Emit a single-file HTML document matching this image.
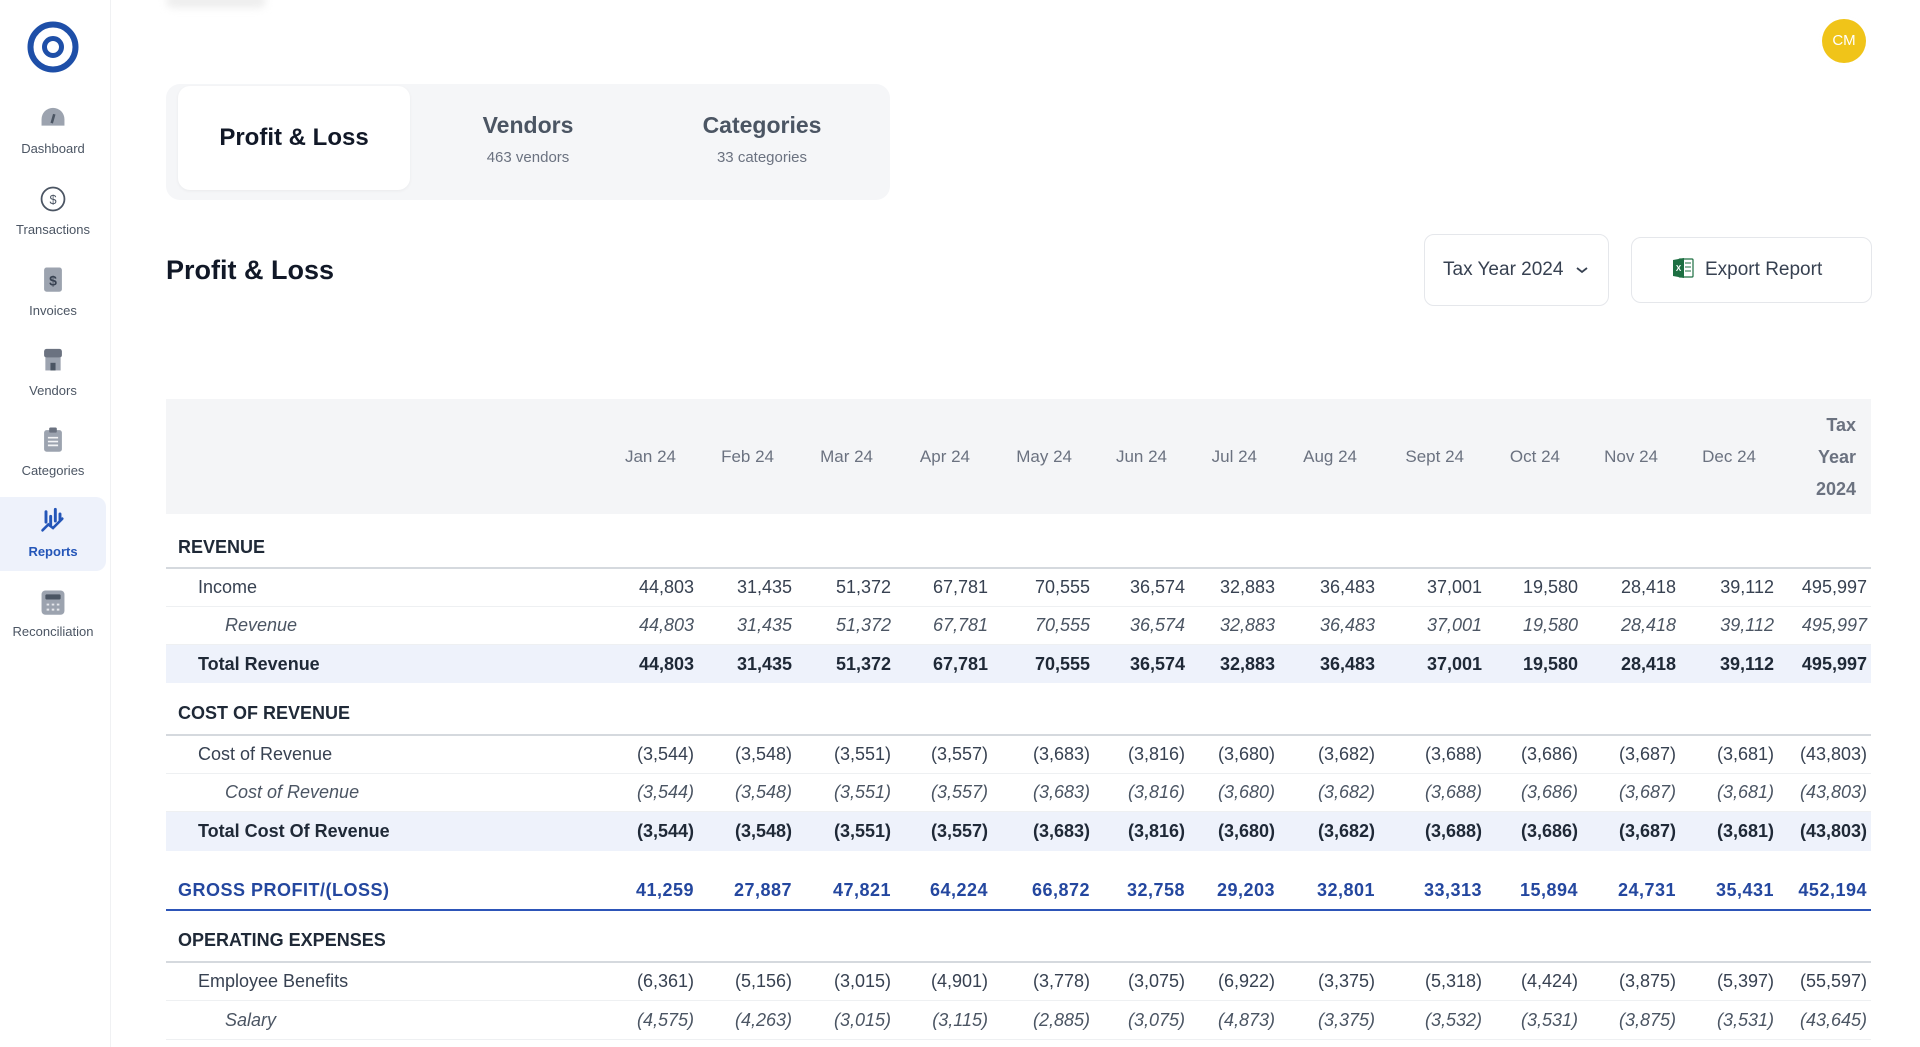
<!DOCTYPE html>
<html><head><meta charset="utf-8"><style>
*{margin:0;padding:0;box-sizing:border-box}
body{width:1920px;height:1047px;overflow:hidden;background:#fff;font-family:"Liberation Sans",sans-serif;color:#1f2937;position:relative}
.side{position:absolute;left:0;top:0;width:111px;height:1047px;background:#fff;border-right:1px solid #f0f1f3}
.nav{position:absolute;left:0;width:106px;text-align:center;font-size:13px;color:#4b5563}
.nav .ic{position:absolute;left:39px;width:28px;height:28px}
.nav .lb{position:absolute;left:0;width:106px;text-align:center}
.tabs{position:absolute;left:166px;top:84px;width:724px;height:116px;background:#f5f6f8;border-radius:14px}
.tab-a{position:absolute;left:12px;top:2px;width:232px;height:104px;background:#fff;border-radius:12px;box-shadow:0 1px 3px rgba(0,0,0,.05);font-size:24px;font-weight:bold;color:#111827;text-align:center;line-height:104px}
.tab{position:absolute;top:28px;width:200px;text-align:center}
.tab b{display:block;font-size:23px;color:#4b5563}
.tab span{display:block;font-size:15px;color:#6b7280;margin-top:10px}
.h1{position:absolute;left:166px;top:255px;font-size:27px;font-weight:bold;color:#111827}
.btn{position:absolute;border:1px solid #e5e7eb;border-radius:10px;background:#fff;font-size:19px;color:#374151}
.row{position:absolute;left:166px;width:1705px;display:grid;grid-template-columns:428px 100px 98px 99px 97px 102px 95px 90px 100px 107px 96px 98px 98px 93px;align-items:center;font-size:18px;color:#374151}
.row>div{text-align:right;white-space:nowrap}
.row>div:first-child{text-align:left}
.hdr{top:399px;height:115px;background:#f4f5f7;color:#6b7280;font-size:17px}
.hdr>div{padding-right:18px}
.sec{font-weight:bold;color:#1f2937;border-bottom:2px solid #d5d9de}
.sec>div:first-child{padding-left:12px}
.r>div:first-child{padding-left:32px}
.r{border-bottom:1px solid #eef0f2}
.it{font-style:italic;color:#4b5563;border-bottom:1px solid #eef0f2}
.it>div:first-child{padding-left:59px}
.tot{background:#eef2fb;font-weight:bold;color:#1f2937}
.tot>div:first-child{padding-left:32px}
.gp{font-weight:bold;color:#24479f;border-bottom:2px solid #2d55b8;letter-spacing:.5px}
.gp>div:first-child{padding-left:12px}
</style></head><body>
<div class="side">
  <svg style="position:absolute;left:27px;top:21px" width="52" height="52" viewBox="0 0 52 52"><circle cx="26" cy="26" r="22.5" fill="none" stroke="#1e4fa8" stroke-width="6"/><circle cx="26" cy="26" r="8.5" fill="none" stroke="#1e4fa8" stroke-width="5"/></svg>
  <div class="nav" style="top:0">
    <svg class="ic" style="top:104px" viewBox="0 0 22 22"><path d="M11 3a9 9 0 0 0-9 9v5h18v-5a9 9 0 0 0-9-9z" fill="#9ca3af"/><path d="M12 8l-2 7" stroke="#4b5563" stroke-width="2"/></svg>
    <div class="lb" style="top:141px">Dashboard</div>
    <svg class="ic" style="top:185px" viewBox="0 0 22 22"><circle cx="11" cy="11" r="9" fill="none" stroke="#4b5563" stroke-width="1.4"/><text x="11" y="15" font-size="10" text-anchor="middle" fill="#4b5563" font-family="Liberation Sans">$</text></svg>
    <div class="lb" style="top:222px">Transactions</div>
    <svg class="ic" style="top:265px" viewBox="0 0 22 22"><rect x="4" y="2" width="14" height="19" rx="2" fill="#9ca3af"/><text x="11" y="16" font-size="11" text-anchor="middle" fill="#374151" font-family="Liberation Sans" font-weight="bold">$</text></svg>
    <div class="lb" style="top:303px">Invoices</div>
    <svg class="ic" style="top:345px" viewBox="0 0 22 22"><rect x="4" y="3" width="14" height="7" rx="2" fill="#6b7280"/><rect x="5" y="10" width="12" height="10" fill="#9ca3af"/><rect x="9" y="14" width="4" height="6" fill="#4b5563"/></svg>
    <div class="lb" style="top:383px">Vendors</div>
    <svg class="ic" style="top:425px" viewBox="0 0 22 22"><rect x="4" y="4" width="14" height="17" rx="2" fill="#9ca3af"/><rect x="8" y="2" width="6" height="4" rx="1" fill="#6b7280"/><path d="M7 10h8M7 13h8M7 16h8" stroke="#f3f4f6" stroke-width="1.3"/></svg>
    <div class="lb" style="top:463px">Categories</div>
  </div>
  <div style="position:absolute;left:0;top:497px;width:106px;height:74px;background:#eef2fb;border-radius:0 10px 10px 0"></div>
  <svg style="position:absolute;left:39px;top:507px" width="28" height="28" viewBox="0 0 24 24"><path d="M6 4v9M10 8v8M14 2v10M18 6v5" stroke="#2456b8" stroke-width="2.5" stroke-linecap="round"/><path d="M3 20l5-5 4 3 8-8" stroke="#2456b8" stroke-width="2.2" fill="none" stroke-linecap="round"/></svg>
  <div style="position:absolute;left:0;top:544px;width:106px;text-align:center;font-size:13px;font-weight:bold;color:#2456b8">Reports</div>
  <svg style="position:absolute;left:39px;top:588px" width="28" height="28" viewBox="0 0 22 22"><rect x="2" y="2" width="18" height="19" rx="3" fill="#9ca3af"/><rect x="5" y="5" width="12" height="4" rx="1" fill="#4b5563"/><path d="M6 13h2M10 13h2M14 13h2M6 17h2M10 17h2M14 17h2" stroke="#e5e7eb" stroke-width="1.5"/></svg>
  <div style="position:absolute;left:0;top:624px;width:106px;text-align:center;font-size:13px;color:#4b5563">Reconciliation</div>
</div>
<div style="position:absolute;left:166px;top:-6px;width:100px;height:14px;background:#eee;border-radius:7px;filter:blur(4px)"></div>
<div style="position:absolute;left:1822px;top:19px;width:44px;height:44px;border-radius:50%;background:#f0c419;color:#fff;font-size:15px;text-align:center;line-height:44px;box-shadow:0 0 0 3px #fff,0 0 4px rgba(0,0,0,.08)">CM</div>

<div class="tabs">
  <div class="tab-a">Profit &amp; Loss</div>
  <div class="tab" style="left:262px"><b>Vendors</b><span>463 vendors</span></div>
  <div class="tab" style="left:496px"><b>Categories</b><span>33 categories</span></div>
</div>
<div class="h1">Profit &amp; Loss</div>
<div class="btn" style="left:1424px;top:234px;width:185px;height:72px;line-height:70px;padding-left:18px">Tax Year 2024 <svg width="14" height="10" viewBox="0 0 14 10" style="margin-left:6px"><path d="M2 3l5 4 5-4" stroke="#374151" stroke-width="1.8" fill="none"/></svg></div>
<div class="btn" style="left:1631px;top:237px;width:241px;height:66px;line-height:64px;padding-left:39px"><svg width="24" height="24" viewBox="0 0 24 24" style="vertical-align:-5px;margin-right:10px"><rect x="8" y="3" width="14" height="18" rx="1" fill="#fff" stroke="#1d6f42" stroke-width="1.2"/><path d="M14 7h6M14 11h6M14 15h6" stroke="#1d6f42"/><path d="M2 4l11-2v20L2 20z" fill="#1d6f42"/><text x="7.5" y="15" font-size="8" fill="#fff" text-anchor="middle" font-family="Liberation Sans" font-weight="bold">X</text></svg>Export Report</div>

<div class="row hdr"><div></div><div>Jan 24</div><div>Feb 24</div><div>Mar 24</div><div>Apr 24</div><div>May 24</div><div>Jun 24</div><div>Jul 24</div><div>Aug 24</div><div>Sept 24</div><div>Oct 24</div><div>Nov 24</div><div>Dec 24</div><div style="padding-right:11px;line-height:32px;font-weight:bold;font-size:18px">Tax<br>Year<br>2024</div></div>

<div class="row sec" style="top:527px;height:42px"><div>REVENUE</div></div>
<div class="row r" style="top:569px;height:38px"><div>Income</div><div>44,803</div><div>31,435</div><div>51,372</div><div>67,781</div><div>70,555</div><div>36,574</div><div>32,883</div><div>36,483</div><div>37,001</div><div>19,580</div><div>28,418</div><div>39,112</div><div>495,997</div></div>
<div class="row it" style="top:607px;height:38px"><div>Revenue</div><div>44,803</div><div>31,435</div><div>51,372</div><div>67,781</div><div>70,555</div><div>36,574</div><div>32,883</div><div>36,483</div><div>37,001</div><div>19,580</div><div>28,418</div><div>39,112</div><div>495,997</div></div>
<div class="row tot" style="top:645px;height:38px"><div>Total Revenue</div><div>44,803</div><div>31,435</div><div>51,372</div><div>67,781</div><div>70,555</div><div>36,574</div><div>32,883</div><div>36,483</div><div>37,001</div><div>19,580</div><div>28,418</div><div>39,112</div><div>495,997</div></div>

<div class="row sec" style="top:693px;height:43px"><div>COST OF REVENUE</div></div>
<div class="row r" style="top:736px;height:38px"><div>Cost of Revenue</div><div>(3,544)</div><div>(3,548)</div><div>(3,551)</div><div>(3,557)</div><div>(3,683)</div><div>(3,816)</div><div>(3,680)</div><div>(3,682)</div><div>(3,688)</div><div>(3,686)</div><div>(3,687)</div><div>(3,681)</div><div>(43,803)</div></div>
<div class="row it" style="top:774px;height:38px"><div>Cost of Revenue</div><div>(3,544)</div><div>(3,548)</div><div>(3,551)</div><div>(3,557)</div><div>(3,683)</div><div>(3,816)</div><div>(3,680)</div><div>(3,682)</div><div>(3,688)</div><div>(3,686)</div><div>(3,687)</div><div>(3,681)</div><div>(43,803)</div></div>
<div class="row tot" style="top:812px;height:39px"><div>Total Cost Of Revenue</div><div>(3,544)</div><div>(3,548)</div><div>(3,551)</div><div>(3,557)</div><div>(3,683)</div><div>(3,816)</div><div>(3,680)</div><div>(3,682)</div><div>(3,688)</div><div>(3,686)</div><div>(3,687)</div><div>(3,681)</div><div>(43,803)</div></div>

<div class="row gp" style="top:871px;height:40px"><div>GROSS PROFIT/(LOSS)</div><div>41,259</div><div>27,887</div><div>47,821</div><div>64,224</div><div>66,872</div><div>32,758</div><div>29,203</div><div>32,801</div><div>33,313</div><div>15,894</div><div>24,731</div><div>35,431</div><div>452,194</div></div>

<div class="row sec" style="top:920px;height:43px"><div>OPERATING EXPENSES</div></div>
<div class="row r" style="top:963px;height:38px"><div>Employee Benefits</div><div>(6,361)</div><div>(5,156)</div><div>(3,015)</div><div>(4,901)</div><div>(3,778)</div><div>(3,075)</div><div>(6,922)</div><div>(3,375)</div><div>(5,318)</div><div>(4,424)</div><div>(3,875)</div><div>(5,397)</div><div>(55,597)</div></div>
<div class="row it" style="top:1001px;height:39px"><div>Salary</div><div>(4,575)</div><div>(4,263)</div><div>(3,015)</div><div>(3,115)</div><div>(2,885)</div><div>(3,075)</div><div>(4,873)</div><div>(3,375)</div><div>(3,532)</div><div>(3,531)</div><div>(3,875)</div><div>(3,531)</div><div>(43,645)</div></div>
</body></html>
